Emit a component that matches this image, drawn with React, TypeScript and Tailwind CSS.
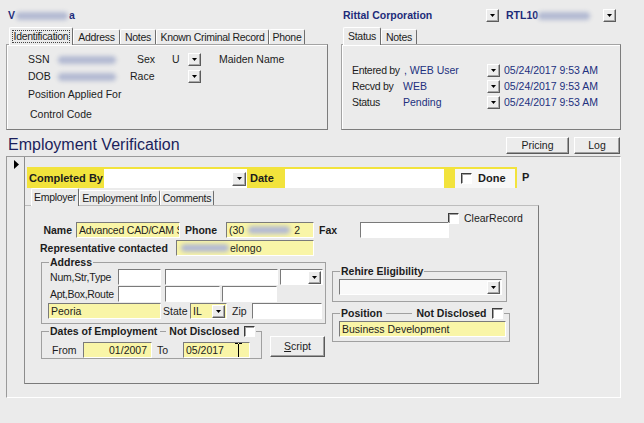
import type { ReactNode } from "react";

const font = "font-['Liberation_Sans',Arial,sans-serif]";

function Blur({ className = "" }: { className?: string }) {
  return <span className={`inline-block h-[8px] rounded-sm bg-[#b3bad2] blur-[2px] ${className}`} />;
}

function DropBtn({ className = "" }: { className?: string }) {
  return (
    <span
      className={`flex h-[13px] w-[13px] shrink-0 items-center justify-center border border-t-white border-l-white border-r-[#5c5c5c] border-b-[#5c5c5c] bg-[#ececec] shadow-[inset_-1px_-1px_0_#a8a8a8] ${className}`}
    >
      <svg width="5" height="3" viewBox="0 0 5 3">
        <path d="M0 0h5L2.5 3z" fill="#000" />
      </svg>
    </span>
  );
}

function Field({ className = "", children }: { className?: string; children?: ReactNode }) {
  return (
    <div
      className={`relative flex h-[16px] shrink-0 items-center overflow-hidden whitespace-nowrap border border-t-[#7a7a7a] border-l-[#7a7a7a] border-r-white border-b-white pl-[2px] ${className}`}
    >
      {children}
    </div>
  );
}

function Check({ className = "" }: { className?: string }) {
  return (
    <span
      className={`block h-[11px] w-[11px] shrink-0 border border-t-[#3c3c3c] border-l-[#3c3c3c] border-r-white border-b-white bg-white shadow-[inset_1px_1px_0_#a0a0a0] ${className}`}
    />
  );
}

function Tab({ active, className = "", children }: { active?: boolean; className?: string; children: ReactNode }) {
  return (
    <div
      className={`flex shrink-0 items-center justify-center whitespace-nowrap rounded-t-[2px] border border-b-0 border-t-white border-l-white border-r-[#6e6e6e] tracking-[-0.3px] ${
        active ? "relative z-10 -mb-px h-[18px] bg-[#ebebeb]" : "h-[15px]"
      } ${className}`}
    >
      {children}
    </div>
  );
}

function Btn({ className = "", children }: { className?: string; children: ReactNode }) {
  return (
    <div
      className={`flex h-[17px] shrink-0 items-center justify-center border border-t-white border-l-white border-r-[#5a5a5a] border-b-[#5a5a5a] bg-[#ececec] shadow-[inset_-1px_-1px_0_#a0a0a0] ${className}`}
    >
      {children}
    </div>
  );
}

const panel =
  "border border-[#a3a3a3] border-r-[#7c7c7c] border-b-[#7c7c7c] shadow-[inset_1px_1px_0_#fff]";
const yellow = "bg-[#f9f5a7]";

export default function App() {
  return (
    <div className={`${font} h-[423px] w-[644px] overflow-hidden bg-[#ebebeb] text-[10.5px] leading-[13px] text-[#1c1c1c]`}>
      <div className="flex">
        {/* applicant */}
        <div className="ml-[6px] w-[322px]">
          <div className="flex h-[27px] items-start pl-[2px] pt-[9px] font-bold text-[#1d2b7a]">
            V<Blur className="mx-[1px] mt-[3px] w-[52px]" />a
          </div>
          <div className="flex h-[17px] items-end pl-[3px]">
            <Tab active className="w-[64px]">
              <span className="border border-dotted border-[#444] px-[1px] leading-[11px]">Identification</span>
            </Tab>
            <Tab className="w-[47px]">Address</Tab>
            <Tab className="w-[36px]">Notes</Tab>
            <Tab className="w-[113px]">Known Criminal Record</Tab>
            <Tab className="w-[36px]">Phone</Tab>
          </div>
          <div className={`h-[86px] ${panel}`}>
            <div className="mt-[8px] flex h-[13px] items-center pl-[21px]">
              <span className="w-[30px]">SSN</span>
              <Blur className="w-[58px]" />
              <span className="ml-[21px] w-[35px]">Sex</span>
              <span className="w-[16px]">U</span>
              <DropBtn />
              <span className="ml-[18px]">Maiden Name</span>
            </div>
            <div className="mt-[4px] flex h-[13px] items-center pl-[21px]">
              <span className="w-[30px]">DOB</span>
              <Blur className="w-[58px]" />
              <span className="ml-[14px] w-[58px]">Race</span>
              <DropBtn />
            </div>
            <div className="mt-[5px] flex h-[13px] items-center pl-[21px]">Position Applied For</div>
            <div className="mt-[7px] flex h-[13px] items-center pl-[23px]">Control Code</div>
          </div>
        </div>

        {/* client */}
        <div className="ml-[13px] w-[280px]">
          <div className="flex h-[27px] items-start pl-[2px] pt-[9px]">
            <div className="flex h-[13px] items-center font-bold text-[#1d2b7a]">
              <span className="w-[143px]">Rittal Corporation</span>
              <DropBtn />
              <span className="ml-[7px]">RTL10</span>
              <Blur className="w-[52px]" />
              <DropBtn className="ml-[13px]" />
            </div>
          </div>
          <div className="flex h-[17px] items-end pl-[2px]">
            <Tab active className="w-[38px]">Status</Tab>
            <Tab className="w-[36px]">Notes</Tab>
          </div>
          <div className={`h-[86px] ${panel} pl-[10px] pt-[19px]`}>
            {[
              ["Entered by", ", WEB User"],
              ["Recvd by", "WEB"],
              ["Status", "Pending"],
            ].map(([label, value], i) => (
              <div key={label} className={`flex h-[13px] items-center ${i ? "mt-[3px]" : ""}`}>
                <span className="w-[50px] whitespace-nowrap tracking-[-0.3px]">{label}</span>
                <span className={`w-[85px] whitespace-nowrap text-[#22307e] ${i ? "pl-[1px]" : "pl-[2px]"}`}>{value}</span>
                <DropBtn />
                <span className="ml-[4px] text-[#22307e]">05/24/2017 9:53 AM</span>
              </div>
            ))}
          </div>
        </div>
      </div>

      {/* title */}
      <div className="ml-[6px] mt-[6px] flex h-[18px] w-[614px] items-center">
        <h1 className="ml-[2px] text-[16px] leading-[18px] text-[#1b1f5c]">Employment Verification</h1>
        <Btn className="ml-auto w-[63px]">Pricing</Btn>
        <Btn className="ml-[5px] w-[46px]">Log</Btn>
      </div>

      {/* record */}
      <div className="ml-[6px] mt-[2px] h-[242px] w-[615px] border border-t-[#9a9a9a] border-l-[#9a9a9a] border-r-white border-b-white">
        <div className="flex h-[227px]">
          <div className="w-[18px] border-r border-[#8c8c8c] pl-[7px] pt-[3px]">
            <svg width="5" height="9" viewBox="0 0 5 9">
              <path d="M0 0l5 4.5L0 9z" fill="#000" />
            </svg>
          </div>

          <div className="flex w-[514px] flex-col pt-[10px]">
            <div className="flex items-center">
              <div className="ml-[2px] flex h-[21px] w-[490px] bg-[#f2e33c] pt-[2px] text-[11px] font-bold">
                <div className="flex w-[77px] items-center pl-[2px]">Completed By</div>
                <div className="flex w-[143px] items-center justify-end bg-white pr-[1px]">
                  <DropBtn className="h-[14px] w-[14px]" />
                </div>
                <div className="flex w-[38px] items-center pl-[3px]">Date</div>
                <div className="w-[159px] bg-white" />
                <div className="w-[11px]" />
                <div className="flex w-[60px] items-center bg-[#f7f7f7] pl-[6px]">
                  <Check />
                  <span className="ml-[6px]">Done</span>
                </div>
              </div>
              <span className="ml-[5px] text-[11px] font-bold">P</span>
            </div>

            <div className="flex h-[17px] items-end pl-[6px]">
              <Tab active className="w-[48px]">Employer</Tab>
              <Tab className="w-[81px]">Employment Info</Tab>
              <Tab className="w-[54px]">Comments</Tab>
            </div>

            <div className="h-[179px] w-[514px] border-t border-r border-b border-t-[#bdbdbd] border-r-[#7a7a7a] border-b-[#7a7a7a]">
              <div className="ml-[423px] mt-[7px] flex h-[11px] items-center">
                <Check />
                <span className="ml-[5px]">ClearRecord</span>
              </div>

              <div className="-mt-[2px] flex h-[16px] items-center font-bold">
                <span className="w-[47px] text-right">Name</span>
                <Field className={`ml-[4px] w-[104px] font-normal tracking-[-0.2px] ${yellow}`}>Advanced CAD/CAM S</Field>
                <span className="ml-[5px] w-[41px]">Phone</span>
                <Field className={`w-[88px] font-normal ${yellow}`}>
                  (30
                  <Blur className="mx-[4px] w-[42px]" />2
                </Field>
                <span className="ml-[5px] w-[41px]">Fax</span>
                <Field className="w-[89px] bg-white" />
              </div>

              <div className="mt-[2px] flex h-[16px] items-center pl-[15px] font-bold">
                <span className="w-[136px] whitespace-nowrap">Representative contacted</span>
                <Field className={`w-[138px] font-normal ${yellow}`}>
                  <Blur className="mr-[1px] ml-[2px] w-[48px]" />elongo
                </Field>
              </div>

              <div className="flex">
                <div className="ml-[16px] flex flex-col">
                  <fieldset className="w-[285px] border border-[#a0a0a0] pb-[4px]">
                    <legend className="ml-[7px] px-[1px] font-bold leading-[12px]">Address</legend>
                    <div className="mt-[1px] flex h-[16px] items-center pl-[8px]">
                      <span className="w-[68px] tracking-[-0.2px]">Num,Str,Type</span>
                      <Field className="w-[43px] bg-white" />
                      <Field className="ml-[4px] w-[113px] bg-white" />
                      <Field className="ml-[2px] w-[43px] justify-end bg-white pr-[1px]">
                        <DropBtn className="h-[12px]" />
                      </Field>
                    </div>
                    <div className="mt-[1px] flex h-[16px] items-center pl-[8px]">
                      <span className="w-[68px] tracking-[-0.3px]">Apt,Box,Route</span>
                      <Field className="w-[43px] bg-white" />
                      <Field className="ml-[4px] w-[55px] bg-white" />
                      <Field className="ml-[2px] w-[55px] bg-white" />
                    </div>
                    <div className="mt-[1px] flex h-[16px] items-center pl-[6px]">
                      <Field className={`w-[113px] ${yellow}`}>Peoria</Field>
                      <span className="ml-[2px] w-[27px]">State</span>
                      <Field className={`w-[37px] justify-between pr-[1px] ${yellow}`}>
                        IL
                        <DropBtn className="h-[12px]" />
                      </Field>
                      <span className="ml-[5px] w-[20px]">Zip</span>
                      <Field className="w-[70px] bg-white" />
                    </div>
                  </fieldset>

                  <div className="mt-[1px] flex items-start">
                    <fieldset className="w-[221px] border border-[#a0a0a0]">
                      <legend className="ml-[7px] flex h-[12px] items-center px-[1px] font-bold">
                        <span>Dates of Employment</span>
                        <span className="mx-[3px] h-px w-[6px] bg-[#a0a0a0]" />
                        <span>Not Disclosed</span>
                        <Check className="ml-[5px]" />
                      </legend>
                      <div className="mt-[5px] flex h-[16px] items-center pl-[10px]">
                        <span className="w-[31px]">From</span>
                        <Field className={`w-[69px] justify-end pr-[4px] ${yellow}`}>01/2007</Field>
                        <span className="ml-[5px] w-[26px]">To</span>
                        <Field className={`w-[67px] ${yellow}`}>
                          05/2017
                          <svg width="7" height="16" viewBox="0 0 7 16" className="absolute left-[51px] top-0">
                            <path d="M0 .5h3M4 .5h3M3.5 1v14M0 15.5h3M4 15.5h3" stroke="#000" fill="none" />
                          </svg>
                        </Field>
                      </div>
                    </fieldset>
                    <Btn className="ml-[8px] mt-[11px] h-[21px] w-[55px]">
                      <span>
                        <span className="underline">S</span>cript
                      </span>
                    </Btn>
                  </div>
                </div>

                <div className="ml-[6px] flex flex-col">
                  <fieldset className="mt-[9px] w-[175px] border border-[#a0a0a0] pb-[6px]">
                    <legend className="ml-[7px] px-[1px] font-bold leading-[12px]">Rehire Eligibility</legend>
                    <div className="mt-[2px] pl-[6px]">
                      <Field className="h-[15px] w-[163px] justify-end bg-[#f9f9f9] pr-[1px]">
                        <DropBtn className="h-[12px]" />
                      </Field>
                    </div>
                  </fieldset>
                  <fieldset className="mt-[5px] w-[178px] border border-[#a0a0a0] pb-[4px]">
                    <legend className="ml-[7px] flex h-[12px] items-center px-[1px] font-bold">
                      <span>Position</span>
                      <span className="mx-[4px] h-px w-[26px] bg-[#a0a0a0]" />
                      <span>Not Disclosed</span>
                      <Check className="ml-[6px]" />
                    </legend>
                    <div className="mt-[2px] pl-[6px]">
                      <Field className={`h-[15px] w-[167px] ${yellow}`}>Business Development</Field>
                    </div>
                  </fieldset>
                </div>
              </div>
            </div>
          </div>
        </div>
      </div>
    </div>
  );
}
